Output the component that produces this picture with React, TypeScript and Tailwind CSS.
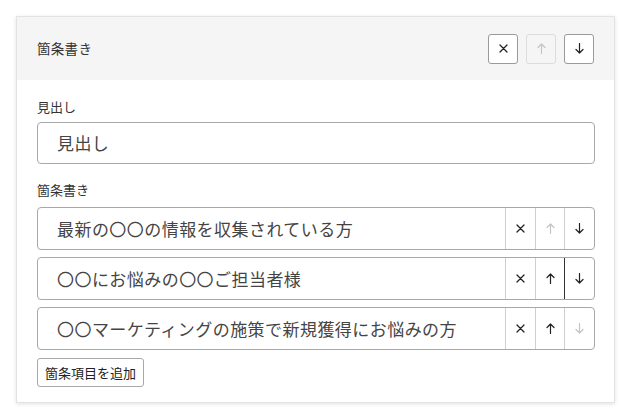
import React from "react";

const XIcon = ({ c = "#222" }: { c?: string }) => (
  <svg width="9" height="9" viewBox="0 0 9 9" fill="none" stroke={c} strokeWidth="1.3" strokeLinecap="round">
    <path d="M1 1L8 8M8 1L1 8" />
  </svg>
);
const UpIcon = ({ c = "#222" }: { c?: string }) => (
  <svg width="9" height="11" viewBox="0 0 9 11" fill="none" stroke={c} strokeWidth="1.2" strokeLinecap="round" strokeLinejoin="round">
    <path d="M4.5 10.5V1M1 4.5L4.5 1L8 4.5" />
  </svg>
);
const DownIcon = ({ c = "#222" }: { c?: string }) => (
  <svg width="9" height="11" viewBox="0 0 9 11" fill="none" stroke={c} strokeWidth="1.2" strokeLinecap="round" strokeLinejoin="round">
    <path d="M4.5 0.5V10M1 6.5L4.5 10L8 6.5" />
  </svg>
);

const rows = [
  { text: "最新の〇〇の情報を収集されている方", up: false, down: true, focus: false },
  { text: "〇〇にお悩みの〇〇ご担当者様", up: true, down: true, focus: true },
  { text: "〇〇マーケティングの施策で新規獲得にお悩みの方", up: true, down: false, focus: false },
];

export default function App() {
  return (
    <div
      className="w-[628px] h-[420px] bg-white pt-4 pl-4"
      style={{ fontFamily: '"Noto Sans CJK JP", "Noto Sans", sans-serif' }}
    >
      <div className="w-[599px] border border-[#e3e3e3] shadow-[0_1px_4px_rgba(0,0,0,0.12)] bg-white">
        <div className="h-[63px] bg-[#f5f5f5] flex items-center justify-between pl-[20px] pr-[20px]">
          <span className="text-[13.5px] text-[#333] tracking-[0.3px]">箇条書き</span>
          <div className="flex gap-2">
            <button className="w-[30px] h-[30px] border border-[#9a9a9a] rounded-[3px] bg-white flex items-center justify-center">
              <XIcon />
            </button>
            <button className="w-[30px] h-[30px] border border-[#dcdcdc] rounded-[3px] bg-[#f5f5f5] flex items-center justify-center">
              <UpIcon c="#c4c4c4" />
            </button>
            <button className="w-[30px] h-[30px] border border-[#9a9a9a] rounded-[3px] bg-white flex items-center justify-center">
              <DownIcon />
            </button>
          </div>
        </div>
        <div className="pl-[20px] pr-[19px] pt-[17px] pb-[15px] flex flex-col">
          <div className="text-[13px] leading-[20px] text-[#333]">見出し</div>
          <div className="mt-[5px] h-[42px] border border-[#a8a8a8] rounded-[4px] flex items-center pl-[19px] text-[17px] text-[#444] tracking-[0.4px]">
            見出し
          </div>
          <div className="mt-[16px] text-[13px] leading-[20px] text-[#333]">箇条書き</div>
          <div className="mt-[7px] flex flex-col gap-[7px]">
            {rows.map((r, i) => (
              <div key={i} className="h-[43px] border border-[#a8a8a8] rounded-[4px] flex overflow-hidden">
                <div className="flex-1 flex items-center pl-[19px] text-[17px] text-[#444] tracking-[0.45px] whitespace-nowrap">
                  {r.text}
                </div>
                <div className="w-[30px] border-l border-[#cfcfcf] flex items-center justify-center">
                  <XIcon />
                </div>
                <div
                  className={
                    r.focus
                      ? "w-[30px] border-l border-r border-l-[#cfcfcf] border-r-[#333] flex items-center justify-center"
                      : "w-[30px] border-l border-r border-[#cfcfcf] flex items-center justify-center"
                  }
                >
                  <UpIcon c={r.up ? "#222" : "#c4c4c4"} />
                </div>
                <div className="w-[29px] flex items-center justify-center">
                  <DownIcon c={r.down ? "#222" : "#c4c4c4"} />
                </div>
              </div>
            ))}
          </div>
          <button className="mt-[8px] self-start h-[29px] px-[7px] border border-[#a8a8a8] rounded-[3px] bg-white text-[13px] text-[#222]">
            箇条項目を追加
          </button>
        </div>
      </div>
    </div>
  );
}
